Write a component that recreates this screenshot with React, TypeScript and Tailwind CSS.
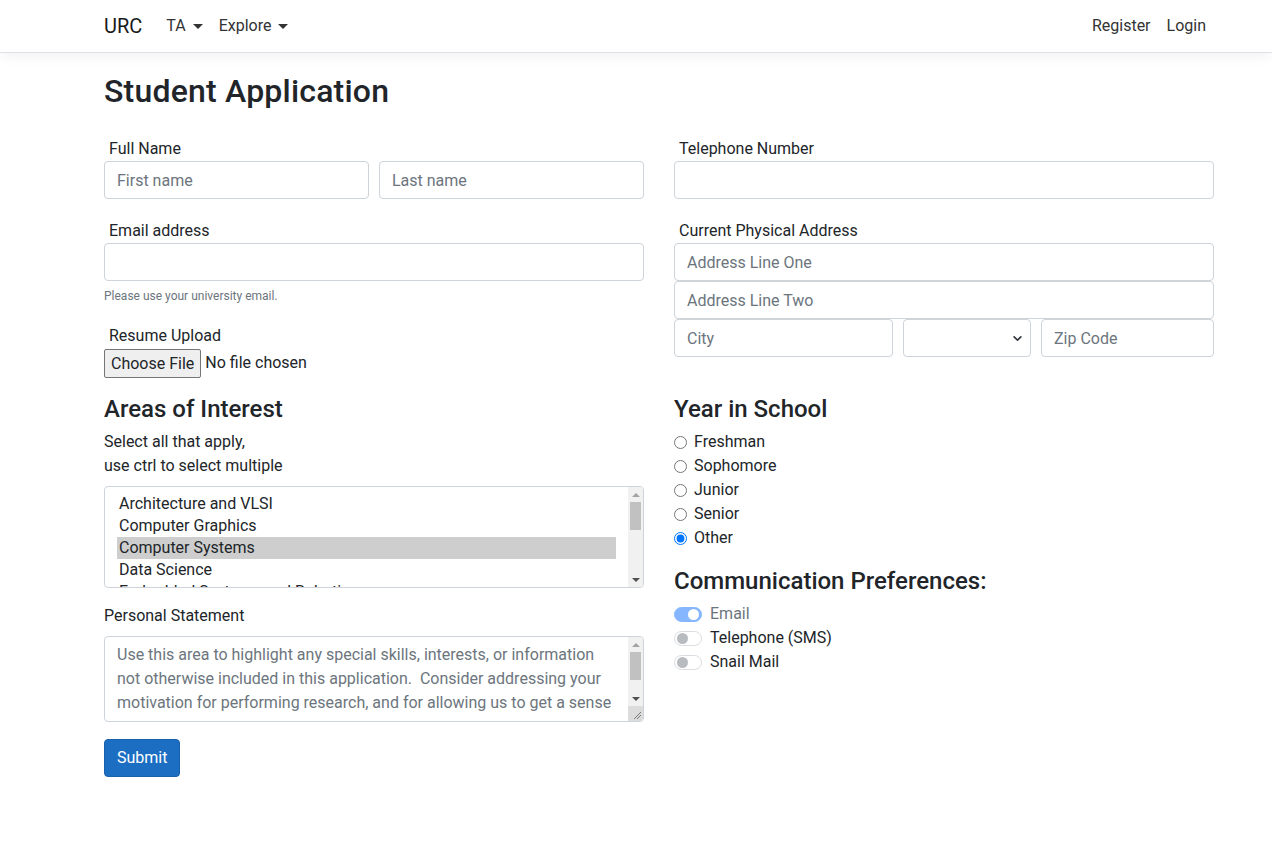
import React from "react";

const interests = [
  "Architecture and VLSI",
  "Computer Graphics",
  "Computer Systems",
  "Data Science",
  "Embedded Systems and Robotics",
];

const years = ["Freshman", "Sophomore", "Junior", "Senior", "Other"];

function Caret() {
  return (
    <span className="ml-[7px] inline-block align-middle border-t-[5px] border-x-[5px] border-t-[#333] border-x-transparent" />
  );
}

function Scrollbar({ corner }: { corner?: boolean }) {
  return (
    <div className="flex w-[15px] flex-col bg-[#f1f1f1]">
      <div className="flex h-[15px] items-center justify-center">
        <span className="border-b-[4px] border-x-[4px] border-b-[#a3a3a3] border-x-transparent" />
      </div>
      <div className="mx-[2px] h-[28px] bg-[#c1c1c1]" />
      <div className="flex-1" />
      <div className="flex h-[15px] items-center justify-center">
        <span className="border-t-[4px] border-x-[4px] border-t-[#505050] border-x-transparent" />
      </div>
      {corner && (
        <div className="relative h-[15px] bg-[#dcdcdc]">
          <svg className="absolute right-[1px] bottom-[1px]" width="9" height="9" viewBox="0 0 9 9">
            <path d="M1 8 L8 1 M4 8 L8 4" stroke="#777" strokeWidth="1" />
          </svg>
        </div>
      )}
    </div>
  );
}

function Field({ placeholder, className = "" }: { placeholder?: string; className?: string }) {
  return (
    <input
      placeholder={placeholder}
      className={
        "block h-[38px] rounded-[4px] border border-[#ced4da] bg-white px-3 text-[16px] text-[#212529] outline-none placeholder:text-[#6c757d] " +
        className
      }
    />
  );
}

function Switch({ on, label }: { on?: boolean; label: string }) {
  return (
    <div className="flex h-[24px] items-center">
      {on ? (
        <span className="flex h-[15px] w-[28px] items-center justify-end rounded-full border border-[#86b7fe] bg-[#86b7fe] pr-[2px]">
          <span className="h-[11px] w-[11px] rounded-full bg-white" />
        </span>
      ) : (
        <span className="flex h-[15px] w-[28px] items-center rounded-full border border-[#d9dce0] bg-white pl-[2px]">
          <span className="h-[11px] w-[11px] rounded-full bg-[#b8bbbf]" />
        </span>
      )}
      <span className={"ml-[8px] " + (on ? "text-[#6c757d]" : "")}>{label}</span>
    </div>
  );
}

export default function App() {
  return (
    <div className="min-h-[857px] bg-white font-['Roboto',sans-serif] text-[16px] leading-[24px] text-[#212529]">
      <header className="h-[53px] border-b border-[#dee2e6] bg-white shadow-[0_4px_12px_rgba(0,0,0,0.05)]">
        <nav className="ml-[104px] flex h-full w-[1110px] items-center">
          <span className="mr-4 text-[20px] text-[#1a1a1a]">URC</span>
          <span className="px-2 text-[#333]">
            TA
            <Caret />
          </span>
          <span className="px-2 text-[#333]">
            Explore
            <Caret />
          </span>
          <div className="ml-auto flex">
            <span className="px-2 text-[#333]">Register</span>
            <span className="px-2 text-[#333]">Login</span>
          </div>
        </nav>
      </header>

      <main className="ml-[104px] w-[1110px]">
        <h1 className="mt-[19px] text-[32px] leading-[38px] font-medium tracking-[0.2px]">Student Application</h1>

        <div className="mt-[27px] grid grid-cols-2 gap-x-[30px]">
          {/* left column */}
          <div className="flex flex-col">
            <label className="pl-[5px]">Full Name</label>
            <div className="flex gap-[10px]">
              <Field placeholder="First name" className="min-w-0 flex-1" />
              <Field placeholder="Last name" className="min-w-0 flex-1" />
            </div>

            <label className="mt-[20px] pl-[5px]">Email address</label>
            <Field className="w-full" />
            <p className="mt-[6px] text-[12px] leading-[18px] text-[#6c757d]">Please use your university email.</p>

            <label className="mt-[19px] pl-[5px]">Resume Upload</label>
            <div className="flex h-[30px] items-center">
              <span className="rounded-[2px] border border-[#767676] bg-[#efefef] px-[6px] leading-[27px]">Choose File</span>
              <span className="ml-[4px]">No file chosen</span>
            </div>

            <h4 className="mt-[17px] text-[24px] leading-[29px] font-medium">Areas of Interest</h4>
            <p className="mt-[6px]">Select all that apply,</p>
            <p>use ctrl to select multiple</p>

            <div className="mt-[8px] flex h-[102px] overflow-hidden rounded-[4px] border border-[#ced4da]">
              <div className="h-full min-w-0 flex-1 overflow-hidden px-3 pt-[6px]">
                {interests.map((item) => (
                  <div
                    key={item}
                    className={
                      "h-[22px] px-[2px] leading-[22px] text-[#212529] " +
                      (item === "Computer Systems" ? "bg-[#cecece]" : "")
                    }
                  >
                    {item}
                  </div>
                ))}
              </div>
              <Scrollbar />
            </div>

            <label className="mt-[16px]">Personal Statement</label>
            <div className="mt-[8px] flex h-[86px] overflow-hidden rounded-[4px] border border-[#ced4da]">
              <div className="min-w-0 flex-1 overflow-hidden whitespace-pre px-3 py-[6px] text-[#6c757d]">
                <div>Use this area to highlight any special skills, interests, or information</div>
                <div>not otherwise included in this application.  Consider addressing your</div>
                <div>motivation for performing research, and for allowing us to get a sense</div>
              </div>
              <Scrollbar corner />
            </div>

            <div className="mt-[17px]">
              <button className="h-[38px] rounded-[4px] border border-[#1861ac] bg-[#1b6ec2] px-3 text-white">
                Submit
              </button>
            </div>
          </div>

          {/* right column */}
          <div className="flex flex-col">
            <label className="pl-[5px]">Telephone Number</label>
            <Field className="w-full" />

            <label className="mt-[20px] pl-[5px]">Current Physical Address</label>
            <Field placeholder="Address Line One" className="w-full" />
            <Field placeholder="Address Line Two" className="w-full" />
            <div className="flex gap-[10px]">
              <Field placeholder="City" className="w-[219px]" />
              <div className="flex h-[38px] w-[128px] items-center justify-end rounded-[4px] border border-[#ced4da] pr-[8px]">
                <svg width="9" height="9" viewBox="0 0 16 16">
                  <path d="M2 5l6 6 6-6" fill="none" stroke="#343a40" strokeWidth="3" strokeLinecap="round" strokeLinejoin="round" />
                </svg>
              </div>
              <Field placeholder="Zip Code" className="min-w-0 flex-1" />
            </div>

            <h4 className="mt-[38px] text-[24px] leading-[29px] font-medium">Year in School</h4>
            <div className="mt-[6px] flex flex-col">
              {years.map((y) => (
                <label key={y} className="flex h-[24px] items-center">
                  <input
                    type="radio"
                    name="year"
                    defaultChecked={y === "Other"}
                    className="m-0 h-[13px] w-[13px]"
                  />
                  <span className="ml-[7px]">{y}</span>
                </label>
              ))}
            </div>

            <h4 className="mt-[17px] text-[24px] leading-[29px] font-medium">Communication Preferences:</h4>
            <div className="mt-[6px] flex flex-col">
              <Switch on label="Email" />
              <Switch label="Telephone (SMS)" />
              <Switch label="Snail Mail" />
            </div>
          </div>
        </div>
      </main>
    </div>
  );
}
